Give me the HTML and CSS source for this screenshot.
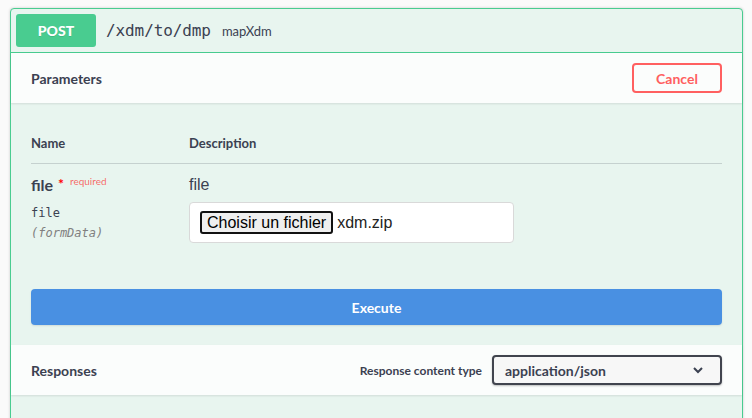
FILE: index.html
```html
<!DOCTYPE html>
<html>
<head>
<meta charset="utf-8">
<link rel="stylesheet" href="styles.css">
</head>
<body>
<div class="opblock">
  <div class="summary">
    <span class="method">POST</span>
    <span class="path">/xdm/to/dmp</span>
    <span class="summary-desc">mapXdm</span>
  </div>
  <div class="section-header params-header">
    <h4 class="section-title">Parameters</h4>
    <button class="cancel">Cancel</button>
  </div>
  <div class="table-container">
    <div class="param-head">
      <div class="col-name">Name</div>
      <div class="col-desc">Description</div>
    </div>
    <div class="param-row">
      <div class="col-name">
        <div class="param-name">file <span class="star">*</span><span class="req">required</span></div>
        <div class="param-type">file</div>
        <div class="param-in">(formData)</div>
      </div>
      <div class="col-desc">
        <div class="markdown">file</div>
        <div class="file-input"><span class="file-btn">Choisir un fichier</span><span class="file-name">xdm.zip</span></div>
      </div>
    </div>
  </div>
  <div class="execute-wrapper">
    <button class="execute">Execute</button>
  </div>
  <div class="section-header responses-header">
    <h4 class="section-title">Responses</h4>
    <div class="content-type">
      <span class="ct-label">Response content type</span>
      <div class="select">
        <span>application/json</span>
        <svg class="chev" width="12" height="8" viewBox="0 0 12 8"><path d="M2 2 L6 6 L10 2" fill="none" stroke="#3b4151" stroke-width="2"/></svg>
      </div>
    </div>
  </div>
  <div class="responses-body"></div>
</div>
</body>
</html>
```
FILE: styles.css
```css
* { box-sizing: border-box; }
html, body { margin: 0; padding: 0; }
body {
  background: #fafafa;
  font-family: Lato, "Open Sans", sans-serif;
  color: #3b4151;
  padding: 8px 9px 0 10px;
  height: 418px;
  overflow: hidden;
}
.opblock {
  border: 1px solid #49cc90;
  border-radius: 4px;
  background: #e8f5ef;
  box-shadow: 0 0 3px rgba(0,0,0,.19);
  height: 430px;
}
.summary {
  display: flex;
  align-items: center;
  padding: 5px;
  border-bottom: 1px solid #49cc90;
}
.method {
  background: #49cc90;
  color: #fff;
  font-weight: 900;
  font-size: 14px;
  min-width: 80px;
  height: 33px;
  line-height: 33px;
  text-align: center;
  border-radius: 3px;
  text-shadow: 0 1px 0 rgba(0,0,0,.1);
}
.path {
  font-family: "DejaVu Sans Mono", monospace;
  font-size: 16px;
  padding: 0 10px;
  letter-spacing: -0.1px;
}
.summary-desc {
  font-size: 13px;
  padding-left: 1px;
}
.section-header {
  display: flex;
  align-items: center;
  justify-content: space-between;
  height: 50px;
  padding: 0 20px;
  background: rgba(255,255,255,.8);
  box-shadow: 0 1px 2px rgba(0,0,0,.1);
}
.section-title {
  margin: 0;
  font-size: 14px;
  font-weight: 700;
}
.cancel {
  width: 90px;
  height: 30px;
  border: 2px solid #ff6060;
  border-radius: 4px;
  background: transparent;
  color: #ff6060;
  font-family: Lato, sans-serif;
  font-size: 14px;
  font-weight: 700;
  padding: 0;
}
.table-container {
  padding: 20px;
}
.param-head {
  display: flex;
  font-size: 13px;
  font-weight: 700;
  padding: 12px 0;
  line-height: 16px;
  border-bottom: 1px solid rgba(59,65,81,.2);
}
.col-name { width: 158px; flex: none; }
.col-desc { flex: 1; }
.param-row {
  display: flex;
  padding: 10px 0 6px;
}
.param-name {
  font-size: 16px;
  font-weight: 700;
  line-height: 22px;
}
.star {
  color: red;
  font-size: 14px;
  position: relative;
  top: -2px;
  margin-left: 1px;
}
.req {
  font-size: 10px;
  font-weight: 400;
  color: rgba(255,0,0,.6);
  position: relative;
  top: -6px;
  margin-left: 6px;
}
.param-type {
  font-family: "DejaVu Sans Mono", monospace;
  font-size: 12px;
  line-height: 20px;
  padding-top: 5px;
}
.param-in {
  font-family: "DejaVu Sans Mono", monospace;
  font-size: 12px;
  font-style: italic;
  line-height: 20px;
  color: gray;
}
.markdown {
  font-family: "Liberation Sans", Arial, sans-serif;
  font-size: 16px;
  line-height: 22px;
  margin-bottom: 6px;
}
.file-input {
  display: flex;
  align-items: center;
  width: 325px;
  height: 41px;
  padding: 0 10px;
  background: #fff;
  border: 1px solid #d9d9d9;
  border-radius: 4px;
  font-family: "Liberation Sans", Arial, sans-serif;
  font-size: 16px;
  color: #222;
}
.file-btn {
  display: inline-block;
  height: 23px;
  line-height: 19px;
  padding: 0 5px;
  border: 2px solid #111;
  border-radius: 3px;
  background: #efefef;
  color: #000;
  margin-right: 4px;
}
.execute-wrapper {
  padding: 20px;
}
.execute {
  display: block;
  width: 100%;
  height: 36px;
  border: none;
  border-radius: 4px;
  background: #4990e2;
  color: #fff;
  font-family: Lato, sans-serif;
  font-size: 14px;
  font-weight: 700;
  box-shadow: 0 1px 2px rgba(0,0,0,.1);
}
.content-type {
  display: flex;
  align-items: center;
  gap: 10px;
}
.ct-label {
  font-size: 12px;
  font-weight: 700;
}
.select {
  display: flex;
  align-items: center;
  justify-content: space-between;
  width: 230px;
  height: 30px;
  padding: 0 16px 0 11px;
  border: 2px solid #41444e;
  border-radius: 4px;
  background: #f7f7f7;
  box-shadow: 0 1px 2px rgba(0,0,0,.25);
  font-size: 14px;
  font-weight: 700;
}
.chev { display: block; }
```
